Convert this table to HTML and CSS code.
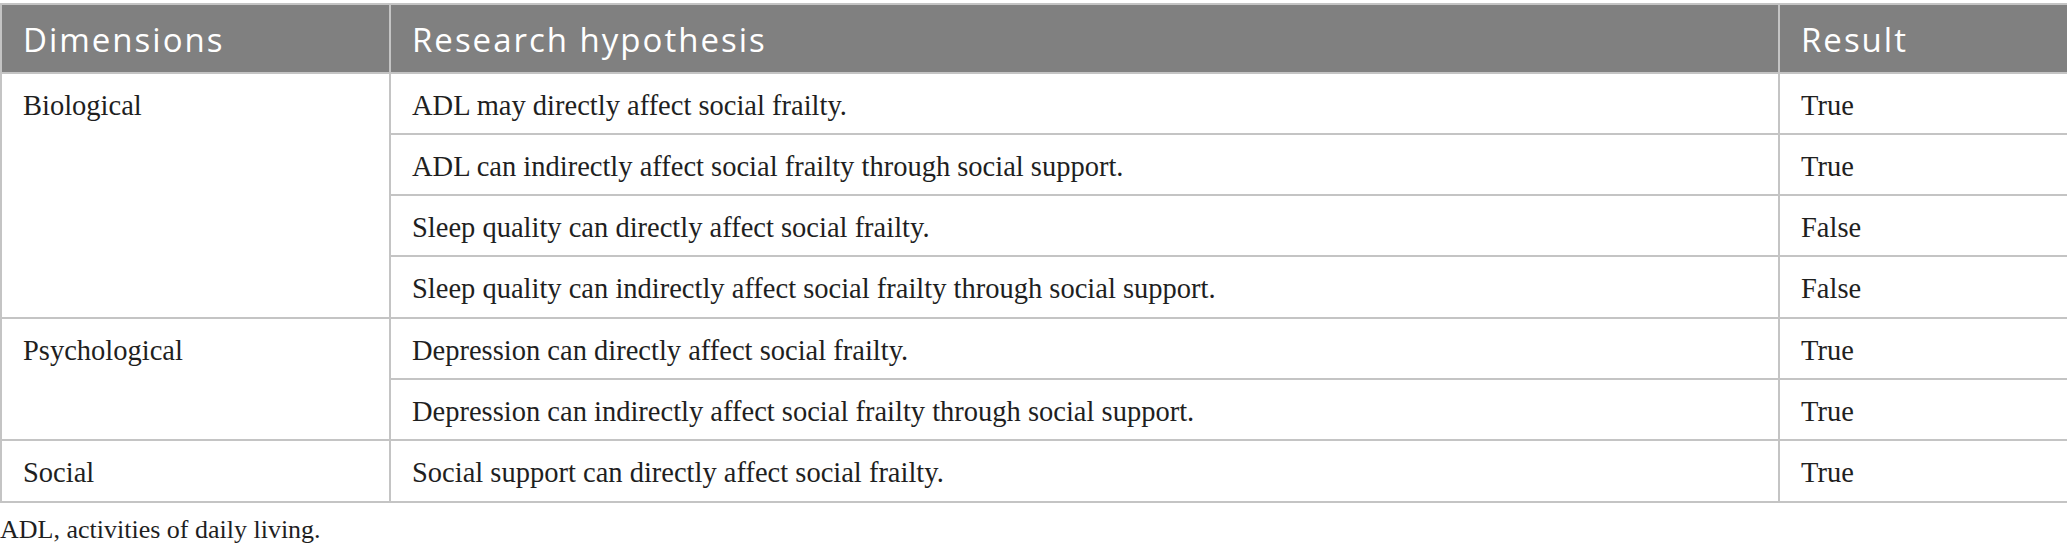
FILE: index.html
```html
<!DOCTYPE html>
<html lang="en">
<head>
<meta charset="utf-8">
<title>Table</title>
<link rel="stylesheet" href="styles.css">
</head>
<body>
<table class="hyp-table">
  <colgroup>
    <col class="col-dim">
    <col class="col-hyp">
    <col class="col-res">
  </colgroup>
  <thead>
    <tr>
      <th>Dimensions</th>
      <th>Research hypothesis</th>
      <th>Result</th>
    </tr>
  </thead>
  <tbody>
    <tr>
      <td rowspan="4">Biological</td>
      <td>ADL may directly affect social frailty.</td>
      <td>True</td>
    </tr>
    <tr>
      <td>ADL can indirectly affect social frailty through social support.</td>
      <td>True</td>
    </tr>
    <tr>
      <td>Sleep quality can directly affect social frailty.</td>
      <td>False</td>
    </tr>
    <tr>
      <td>Sleep quality can indirectly affect social frailty through social support.</td>
      <td>False</td>
    </tr>
    <tr>
      <td rowspan="2">Psychological</td>
      <td>Depression can directly affect social frailty.</td>
      <td>True</td>
    </tr>
    <tr>
      <td>Depression can indirectly affect social frailty through social support.</td>
      <td>True</td>
    </tr>
    <tr>
      <td>Social</td>
      <td>Social support can directly affect social frailty.</td>
      <td>True</td>
    </tr>
  </tbody>
</table>
<p class="footnote">ADL, activities of daily living.</p>
</body>
</html>
```

FILE: styles.css
```css
html, body {
  margin: 0;
  padding: 0;
  background: #ffffff;
}

body {
  padding-top: 3px;
  font-family: "Liberation Serif", "DejaVu Serif", serif;
  color: #1f1f1f;
}

.hyp-table {
  width: 2067px;
  border-collapse: collapse;
  table-layout: fixed;
  border: 2px solid #c4c4c4;
}

.col-dim { width: 389px; }
.col-hyp { width: 1389px; }
.col-res { width: 289px; }

.hyp-table th {
  background: #808080;
  color: #ffffff;
  font-family: "Open Sans", "Noto Sans", sans-serif;
  font-weight: 400;
  font-size: 33px;
  letter-spacing: 2px;
  text-align: left;
  line-height: 40px;
  height: 68.5px;
  padding: 15px 20px 0 21px;
  box-sizing: border-box;
  vertical-align: top;
  border: 2px solid #c4c4c4;
  border-top: 0;
  border-bottom: 0;
}

.hyp-table td {
  font-size: 28.5px;
  line-height: 33px;
  height: 61.3px;
  padding: 15px 20px 11px 21px;
  box-sizing: border-box;
  vertical-align: top;
  border: 2px solid #c4c4c4;
}

.footnote {
  margin: 10px 0 0 0;
  font-size: 26px;
  line-height: 33px;
  color: #1f1f1f;
}
```
